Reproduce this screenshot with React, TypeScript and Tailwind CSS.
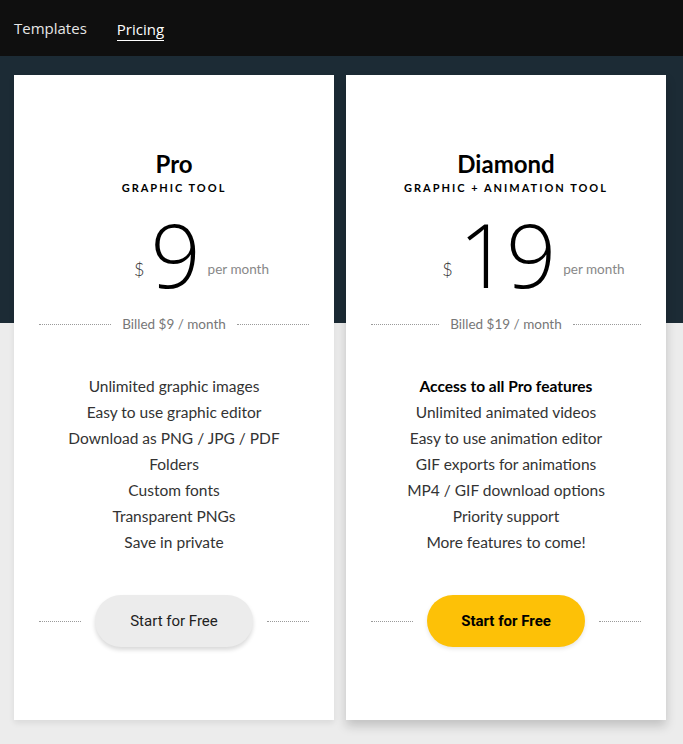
import React from 'react';

type Plan = {
  name: string;
  subtitle: string;
  price: string;
  features: string[];
  highlight?: string;
  primary?: boolean;
};

const plans: Plan[] = [
  {
    name: 'Pro',
    subtitle: 'Graphic tool',
    price: '9',
    features: [
      'Unlimited graphic images',
      'Easy to use graphic editor',
      'Download as PNG / JPG / PDF',
      'Folders',
      'Custom fonts',
      'Transparent PNGs',
      'Save in private',
    ],
  },
  {
    name: 'Diamond',
    subtitle: 'Graphic + Animation tool',
    price: '19',
    highlight: 'Access to all Pro features',
    features: [
      'Unlimited animated videos',
      'Easy to use animation editor',
      'GIF exports for animations',
      'MP4 / GIF download options',
      'Priority support',
      'More features to come!',
    ],
    primary: true,
  },
];

const Dots = () => <div className="flex-1 border-t border-dotted border-[#9a9a9a]" />;

const PlanCard: React.FC<{ plan: Plan }> = ({ plan }) => (
  <div
    className={`w-[320px] h-[645px] bg-white flex flex-col items-center pt-[74px] ${
      plan.primary ? 'shadow-[0_6px_10px_rgba(0,0,0,0.18)]' : 'shadow-[0_3px_6px_rgba(0,0,0,0.08)]'
    }`}
  >
    <h2 className="text-[24px] leading-[30px] font-bold text-black">{plan.name}</h2>
    <p className="text-[11px] leading-[14px] font-bold uppercase tracking-[2px] text-black mt-[2px]">
      {plan.subtitle}
    </p>

    {/* number is centred, currency and period hang on either side */}
    <div className="relative mt-[14px] h-[90px] flex items-center">
      <span className="absolute right-full mr-[6px] top-[48px] text-[18px] leading-[24px] text-[#333] font-light">$</span>
      <span className="text-[88px] leading-[90px] font-light font-['Open_Sans',sans-serif] text-black tracking-[-3px]">
        {plan.price}
      </span>
      <span className="absolute left-full ml-[10px] top-[51px] whitespace-nowrap text-[13.5px] leading-[18px] text-[#888]">
        per month
      </span>
    </div>

    <div className="w-full px-[25px] flex items-center gap-[11px] mt-[15px]">
      <Dots />
      <span className="text-[13.5px] text-[#777]">Billed ${plan.price} / month</span>
      <Dots />
    </div>

    <ul className="mt-[39px] flex flex-col items-center text-[15.5px] leading-[26px] text-[#333]">
      {plan.highlight && <li className="font-bold text-black">{plan.highlight}</li>}
      {plan.features.map((f) => (
        <li key={f}>{f}</li>
      ))}
    </ul>

    <div className="w-full px-[25px] flex items-center gap-[14px] mt-auto mb-[73px]">
      <Dots />
      <button
        className={`w-[158px] h-[52px] rounded-full text-[15px] font-['Roboto',sans-serif] ${
          plan.primary
            ? 'bg-[#fdc107] font-bold text-black shadow-[0_2px_4px_rgba(0,0,0,0.1)]'
            : 'bg-[#ececec] text-[#222] shadow-[0_3px_4px_rgba(0,0,0,0.15)]'
        }`}
      >
        Start for Free
      </button>
      <Dots />
    </div>
  </div>
);

export default function App() {
  return (
    <div className="min-h-[744px] font-['Lato',sans-serif] bg-[linear-gradient(to_bottom,#0f0f0f_0px,#0f0f0f_56px,#1c2b35_56px,#1c2b35_323px,#ececec_323px)]">
      <nav className="h-[56px] flex items-center px-[14px] gap-[30px] font-['Open_Sans',sans-serif] text-[15px]">
        <a className="text-[#e6e6e6]">Templates</a>
        <a className="text-white border-b border-white leading-[22px] pt-[2px]">Pricing</a>
      </nav>
      <div className="flex gap-[12px] px-[14px] pt-[19px]">
        {plans.map((p) => (
          <PlanCard key={p.name} plan={p} />
        ))}
      </div>
    </div>
  );
}
